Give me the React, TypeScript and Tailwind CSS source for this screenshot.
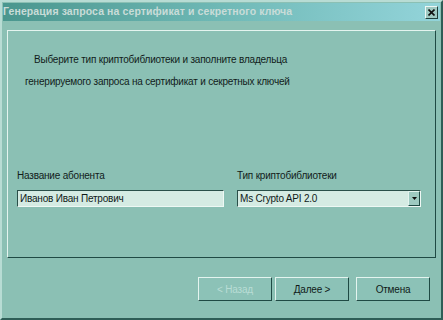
import React from "react";

const raised =
  "border border-t-[#e4f4ef] border-l-[#e4f4ef] border-b-[#1f4a44] border-r-[#1f4a44]";
const sunken =
  "border border-t-[#2a4f49] border-l-[#2a4f49] border-b-[#eef8f4] border-r-[#eef8f4]";

function WizardButton({ label, disabled }: { label: string; disabled?: boolean }) {
  return (
    <button
      disabled={disabled}
      className={`flex h-[24px] w-[74px] items-center justify-center bg-[#8cc2b7] text-[10px] tracking-[-0.2px] ${raised} ${
        disabled ? "text-[#b9ddd5]" : "text-[#101b19]"
      }`}
    >
      {label}
    </button>
  );
}

export default function App() {
  return (
    <div
      className="flex h-[320px] w-[443px] flex-col border-2 border-t-[#b8dcd4] border-l-[#b8dcd4] border-b-[#2e5e57] border-r-[#2e5e57] bg-[#8bc0b4]"
      style={{ fontFamily: '"Liberation Sans", "DejaVu Sans", sans-serif' }}
    >
      {/* title bar */}
      <div className="mx-[1px] mt-[1px] flex h-[18px] items-center justify-between bg-gradient-to-r from-[#4a968e] via-[#6fb9b6] to-[#93d4da] pr-[2px]">
        <span className="text-[10.5px] font-bold tracking-[0.1px] text-[#c9dcd8]">
          Генерация запроса на сертификат и секретного ключа
        </span>
        <span className="flex h-[13px] w-[13px] items-center justify-center border border-t-[#eef7f5] border-l-[#eef7f5] border-b-[#20403c] border-r-[#20403c] bg-[#9fc9c2]">
          <svg width="7" height="7" viewBox="0 0 7 7">
            <path d="M0.5 0.5 L6.5 6.5 M6.5 0.5 L0.5 6.5" stroke="#101010" strokeWidth="1.6" />
          </svg>
        </span>
      </div>

      {/* content panel */}
      <div className={`mx-[5px] mt-[9px] flex h-[228px] flex-col ${raised} border-t-[#d6eee8] border-l-[#d6eee8]`}>
        <div className="pt-[22px] text-[10px] leading-[14px] tracking-[-0.2px] text-[#111c1a]">
          <p className="pl-[26px]">Выберите тип криптобиблиотеки и заполните владельца</p>
          <p className="mt-[8px] pl-[17px]">генерируемого запроса на сертификат и секретных ключей</p>
        </div>

        <div className="mt-[80px] flex gap-[13px] pl-[9px] text-[10px] tracking-[-0.2px]">
          <div className="flex flex-col">
            <span className="leading-[14px] text-[#111c1a]">Название абонента</span>
            <div className={`mt-[7px] flex h-[17px] w-[207px] items-center bg-[#d5ebe3] pl-[2px] text-[#0f1a18] ${sunken}`}>
              Иванов Иван Петрович
            </div>
          </div>
          <div className="flex flex-col">
            <span className="leading-[14px] text-[#111c1a]">Тип криптобиблиотеки</span>
            <div className={`mt-[7px] flex h-[17px] w-[184px] items-center justify-between bg-[#d5ebe3] pl-[2px] text-[#0f1a18] ${sunken}`}>
              <span>Ms Crypto API 2.0</span>
              <span className={`flex h-[15px] w-[12px] items-center justify-center bg-[#9ecac1] ${raised}`}>
                <svg width="5" height="3" viewBox="0 0 5 3">
                  <path d="M0 0 H5 L2.5 3 Z" fill="#101010" />
                </svg>
              </span>
            </div>
          </div>
        </div>
      </div>

      {/* buttons */}
      <div className="mt-[19px] flex justify-end gap-[3px] pr-[11px]">
        <WizardButton label="< Назад" disabled />
        <WizardButton label="Далее >" />
        <div className="w-[1px]" />
        <WizardButton label="Отмена" />
      </div>
    </div>
  );
}
